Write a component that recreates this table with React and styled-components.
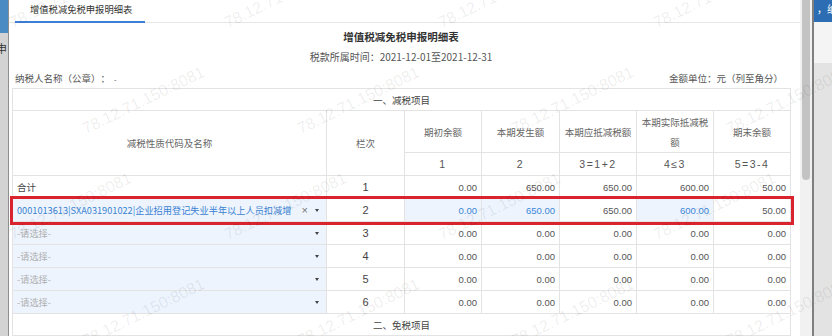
import React from "react";
import styled, { createGlobalStyle } from "styled-components";

const GlobalStyle = createGlobalStyle`
  html, body {
    margin: 0;
    padding: 0;
  }
  body {
    width: 832px;
    height: 336px;
    overflow: hidden;
    background: #e2e2e2;
    font-family: "Noto Sans CJK SC", "Liberation Sans", sans-serif;
    text-spacing-trim: space-all;
  }
`;

const summaryRows = [
  {
    line: 1,
    name: "合计",
    values: ["0.00", "650.00", "650.00", "600.00", "50.00"],
    total: true,
  },
  {
    line: 2,
    name: "0001013613|SXA031901022|企业招用登记失业半年以上人员扣减增",
    values: ["0.00", "650.00", "650.00", "600.00", "50.00"],
    selected: true,
  },
  { line: 3, values: ["0.00", "0.00", "0.00", "0.00", "0.00"] },
  { line: 4, values: ["0.00", "0.00", "0.00", "0.00", "0.00"] },
  { line: 5, values: ["0.00", "0.00", "0.00", "0.00", "0.00"] },
  { line: 6, values: ["0.00", "0.00", "0.00", "0.00", "0.00"] },
];

// columns the user can type into
const editable = [true, true, false, true, false];

const marks = [];
for (let r = 0; r < 4; r++) {
  const y = 28 + r * 106;
  const x0 = r % 2 ? 87 : 14;
  for (let k = -1; k < 4; k++) marks.push({ x: x0 + k * 214.5, y });
}

function App() {
  return (
    <>
      <GlobalStyle />
      <Page>
        <LeftBackdrop>
          <BackTop />
          <BackRest>
            <span>申</span>
          </BackRest>
        </LeftBackdrop>

        <Modal>
          <Main>
            <TabBar>
              <Tab>增值税减免税申报明细表</Tab>
            </TabBar>

            <Content>
              <Title>增值税减免税申报明细表</Title>
              <Period>税款所属时间：2021-12-01至2021-12-31</Period>
              <InfoRow>
                <span>
                  纳税人名称（公章）：<Redacted>-</Redacted>
                </span>
                <span>金额单位：元（列至角分）</span>
              </InfoRow>

              <Table>
                <colgroup>
                  <col style={{ width: 314 }} />
                  <col style={{ width: 78 }} />
                  <col style={{ width: 77 }} />
                  <col style={{ width: 78 }} />
                  <col style={{ width: 77 }} />
                  <col style={{ width: 77 }} />
                  <col style={{ width: 77 }} />
                </colgroup>
                <tbody>
                  <SectionRow>
                    <SectionCell colSpan={7}>一、减税项目</SectionCell>
                  </SectionRow>
                  <HeadRow>
                    <HeadCell rowSpan={2}>减税性质代码及名称</HeadCell>
                    <HeadCell rowSpan={2}>栏次</HeadCell>
                    <HeadCell>期初余额</HeadCell>
                    <HeadCell>本期发生额</HeadCell>
                    <HeadCell>本期应抵减税额</HeadCell>
                    <HeadCell>
                      本期实际抵减税
                      <br />额
                    </HeadCell>
                    <HeadCell>期末余额</HeadCell>
                  </HeadRow>
                  <DataRow>
                    <FormulaCell>1</FormulaCell>
                    <FormulaCell>2</FormulaCell>
                    <FormulaCell>3=1+2</FormulaCell>
                    <FormulaCell>4≤3</FormulaCell>
                    <FormulaCell>5=3-4</FormulaCell>
                  </DataRow>

                  {summaryRows.map((row) => {
                    const Row = row.selected ? SelectedRow : DataRow;
                    return (
                      <Row key={row.line}>
                        {row.total ? (
                          <NameCell>{row.name}</NameCell>
                        ) : (
                          <NameCell $input>
                            <Select>
                              <SelectText $empty={!row.name}>
                                {row.name || "-请选择-"}
                              </SelectText>
                              {row.name && <Clear>×</Clear>}
                              <Caret />
                            </Select>
                          </NameCell>
                        )}
                        <LineCell>{row.line}</LineCell>
                        {row.values.map((v, i) => {
                          const active = row.selected && editable[i];
                          return (
                            <ValueCell key={i} $input={active} $blue={active}>
                              {v}
                            </ValueCell>
                          );
                        })}
                      </Row>
                    );
                  })}

                  <SectionRow>
                    <SectionCell colSpan={7}>二、免税项目</SectionCell>
                  </SectionRow>
                </tbody>
              </Table>
            </Content>
          </Main>

          <Scrollbar>
            <Thumb />
          </Scrollbar>
        </Modal>

        <RightBackdrop>
          <RightTop>，纳</RightTop>
          <RightMid />
          <RightRest />
        </RightBackdrop>

        <Watermarks>
          {marks.map((m, i) => (
            <Mark key={i} style={{ left: m.x, top: m.y - 13 }}>
              78.12.71.150:8081
            </Mark>
          ))}
        </Watermarks>
      </Page>
    </>
  );
}

export default App;

const Page = styled.div`
  position: relative;
  display: flex;
  width: 832px;
  height: 336px;
  overflow: hidden;
`;

const LeftBackdrop = styled.div`
  flex: none;
  width: 8px;
  display: flex;
  flex-direction: column;
  border-right: 1px solid #8e8e8e;
  overflow: hidden;
`;
const BackTop = styled.div`
  height: 33px;
  background: #4a8bc4;
`;
const BackRest = styled.div`
  flex: 1;
  background: #d3d3d3;
  padding-top: 9px;
  font-size: 11px;
  line-height: 12px;
  color: #333;
  white-space: nowrap;

  span {
    display: block;
    margin-left: -4px;
  }
`;

const Modal = styled.div`
  flex: none;
  width: 803px;
  display: flex;
  background: #fff;
`;

const Main = styled.div`
  flex: 1;
  min-width: 0;
  display: flex;
  flex-direction: column;
`;

const TabBar = styled.div`
  display: flex;
  height: 23px;
  box-sizing: border-box;
  border-bottom: 1px solid #e6e6e6;
`;
const Tab = styled.div`
  width: 130px;
  height: 23px;
  box-sizing: border-box;
  margin-left: 6px;
  margin-bottom: -1px;
  padding: 3px 0 0 15px;
  border-bottom: 2px solid #3b7fd9;
  font-size: 9.3px;
  line-height: 12px;
  color: #333;
  white-space: nowrap;
`;

const Content = styled.div`
  padding: 0 10px 0 3px;
`;

const Title = styled.div`
  margin-top: 7px;
  text-align: center;
  font-size: 10.5px;
  line-height: 14px;
  font-weight: bold;
  color: #333;
`;
const Period = styled.div`
  margin-top: 6px;
  text-align: center;
  font-size: 10px;
  line-height: 14px;
  color: #555;
`;
const InfoRow = styled.div`
  margin-top: 7px;
  display: flex;
  justify-content: space-between;
  padding: 0 7px 0 3px;
  font-size: 9.5px;
  line-height: 14px;
  color: #555;
`;
const Redacted = styled.span`
  margin-left: 4px;
  font-size: 7px;
  color: #333;
`;

const Table = styled.table`
  margin-top: 2px;
  width: 778px;
  table-layout: fixed;
  border-collapse: collapse;
`;

const SectionRow = styled.tr`
  height: 22px;
`;
const SectionCell = styled.td`
  border: 1px solid #e3e3e3;
  padding: 0;
  text-align: center;
  font-size: 9.5px;
  color: #444;
`;

const HeadRow = styled.tr`
  height: 42px;
`;
const HeadCell = styled.th`
  border: 1px solid #e3e3e3;
  padding: 0 4px;
  font-weight: normal;
  font-size: 9.5px;
  line-height: 20px;
  color: #666;
  text-align: center;
`;

const DataRow = styled.tr`
  height: 23px;
`;
const SelectedRow = styled(DataRow)`
  outline: 3px solid #d9232e;
  outline-offset: 0;
`;

const FormulaCell = styled.td`
  border: 1px solid #e3e3e3;
  padding: 0;
  text-align: center;
  font-family: "Liberation Sans", sans-serif;
  font-size: 10.5px;
  letter-spacing: 1.5px;
  color: #555;
`;

const NameCell = styled.td`
  border: 1px solid #e3e3e3;
  padding: 0 7px 0 4px;
  font-size: 9.5px;
  color: #444;
  background: ${(p) => (p.$input ? "#edf4fd" : "#fff")};
`;

const Select = styled.div`
  display: flex;
  align-items: center;
`;
const SelectText = styled.span`
  flex: 1;
  min-width: 0;
  overflow: hidden;
  white-space: nowrap;
  font-size: 9.2px;
  color: ${(p) => (p.$empty ? "#b0b0b0" : "#3a82d2")};
`;
const Clear = styled.span`
  margin: 0 7px 0 2px;
  font-family: "Liberation Sans", sans-serif;
  font-size: 11px;
  color: #777;
`;
const Caret = styled.span`
  width: 0;
  height: 0;
  border-left: 2.5px solid transparent;
  border-right: 2.5px solid transparent;
  border-top: 3px solid #444;
`;

const LineCell = styled.td`
  border: 1px solid #e3e3e3;
  padding: 0;
  text-align: center;
  font-family: "Liberation Sans", sans-serif;
  font-size: 11px;
  color: #444;
  background: #fff;
`;

const ValueCell = styled.td`
  border: 1px solid #e3e3e3;
  padding: 0 4px;
  text-align: right;
  font-family: "Liberation Sans", sans-serif;
  font-size: 9.5px;
  color: ${(p) => (p.$blue ? "#3a86d6" : "#555")};
  background: ${(p) => (p.$input ? "#edf4fd" : "#fff")};
`;

const Scrollbar = styled.div`
  flex: none;
  width: 12px;
  background: #f1f1f1;
`;
const Thumb = styled.div`
  margin: 0 2px;
  height: 180px;
  border-radius: 0 0 4px 4px;
  background: #c3c3c3;
`;

const RightBackdrop = styled.div`
  flex: 1;
  display: flex;
  flex-direction: column;
  border-left: 2px solid #7f7f7f;
  overflow: hidden;
`;
const RightTop = styled.div`
  height: 22px;
  background: #2c6db3;
  padding: 3px 0 0 3px;
  box-sizing: border-box;
  font-size: 10px;
  line-height: 12px;
  color: #fff;
  white-space: nowrap;
`;
const RightMid = styled.div`
  height: 41px;
  background: #f4f4f4;
`;
const RightRest = styled.div`
  flex: 1;
  background: #e3e3e3;
`;

const Watermarks = styled.div`
  position: absolute;
  inset: 0;
  overflow: hidden;
  pointer-events: none;
`;
const Mark = styled.span`
  position: absolute;
  font-family: "Liberation Sans", sans-serif;
  font-size: 16px;
  line-height: 16px;
  white-space: nowrap;
  color: rgba(0, 0, 0, 0.08);
  transform-origin: 0 100%;
  transform: rotate(-26deg);
`;
